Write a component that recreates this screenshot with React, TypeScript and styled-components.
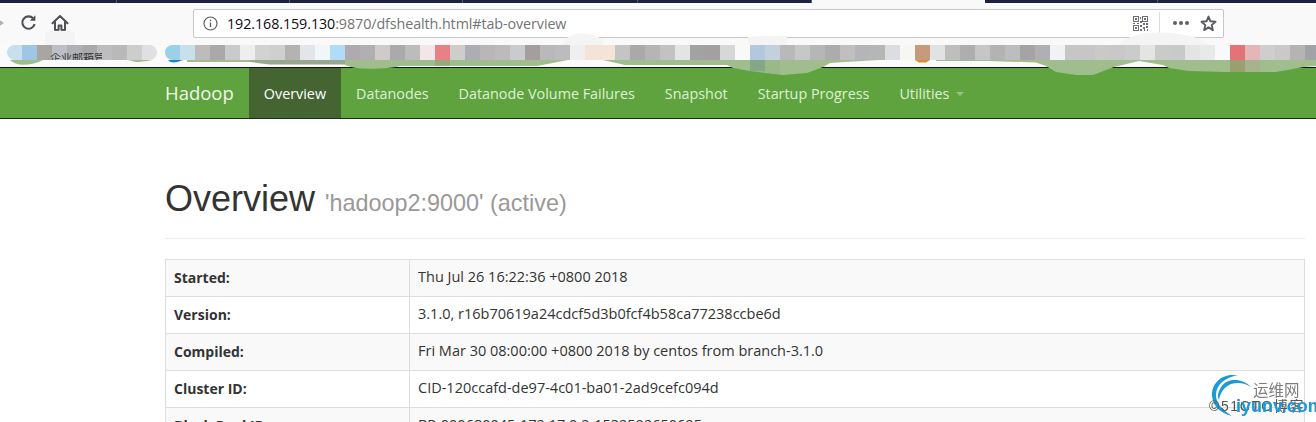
import React from "react";
import styled, { createGlobalStyle } from "styled-components";

const tabs = [117, 173, 173, 175, 174, 173, 173, 160];
const iconColor = "#4f4f55";

const firstCells = ["#c8dfee", "#9fc6e5", "#a9a5a3", "#bcc0c6", "#b0b1b4", "#a9a9ab", "#bdbdbf", "#b9b9b9", "#cdcdcd", "#e0e0e2"];
const secondCells = [
	"#9bd0e8", "#c8e0ec", "#bdbbbb", "#a9a9a9", "#c9cace", "#eeeeef", "#d2d2d2", "#cfcfcf", "#b5b3b1", "#e3e5e9",
	"#f1f6f8", "#b0dcf8", "#aeaab0", "#b0b0b2", "#cfcbca", "#a9aaac", "#bcbcbc", "#f3e6e8", "#e88087", "#cecdca",
	"#acaeb3", "#b8b6b8", "#bcbabb", "#cacbce", "#a49f9e", "#b9b9bc", "#bcbcbf", "#efeff0", "#f5e3d8", "#f5e3d8",
	"#c4c4c4", "#a9a9ab", "#b5b5b5", "#c2c2c4", "#e3e4e6", "#a2a2a3", "#a2a0a0", "#d6d7d8", "#f9f9fa", "#b3c7df",
	"#c4d0de", "#b9b9b9", "#c6c7c8", "#b6b6b8", "#acacad", "#c0bebe", "#b4b5b6", "#b6b6b6", "#dcdde1", "#f6f6f2",
	"#c69a7c", "#e2e2e2", "#bebebc", "#aeaeae", "#c6c6c6", "#b4b3b3", "#bcbdc1", "#a5a3a4", "#b0b0b2", "#f1f2f5",
	"#c6c6c6", "#c6c6c6", "#c9c9c6", "#c8c8ca", "#cbcbcc", "#e4e4e0", "#cacaca", "#c8c9cb", "#e4e4e4", "#e8e9eb",
	"#f9f9fa", "#e47277", "#e4b6b8", "#cecece", "#c9cac8", "#b5b4b2", "#a0a4a8",
];

const navItems = ["Datanodes", "Datanode Volume Failures", "Snapshot", "Startup Progress"];

const rows = [
	["Started:", "Thu Jul 26 16:22:36 +0800 2018"],
	["Version:", "3.1.0, r16b70619a24cdcf5d3b0fcf4b58ca77238ccbe6d"],
	["Compiled:", "Fri Mar 30 08:00:00 +0800 2018 by centos from branch-3.1.0"],
	["Cluster ID:", "CID-120ccafd-de97-4c01-ba01-2ad9cefc094d"],
	["Block Pool ID:", "BP-000680045-172.17.0.2-1532592650695"],
];

const QrIcon = () => (
	<svg width="15" height="15" viewBox="0 0 15 15" fill="none" stroke="#6d6d75">
		<rect x="0.5" y="0.5" width="5" height="5" />
		<rect x="9.5" y="0.5" width="5" height="5" />
		<rect x="0.5" y="9.5" width="5" height="5" />
		<path d="M2 2h2v2H2zM11 2h2v2h-2zM2 11h2v2H2z" fill="#6d6d75" stroke="none" />
		<path d="M7 1h1v2H7zM7 5h2v2H7zM0 7h2v1H0zM4 7h2v1H4zM10 7h2v2h-2zM13 7h2v2h-2zM7 9h2v2H7zM10 11h2v2h-2zM13 10h2v2h-2zM7 13h2v2H7zM11 13h1v2h-1zM14 13h1v2h-1z" fill="#6d6d75" stroke="none" />
	</svg>
);

const App = () => {
	return (
		<Page>
			<GlobalStyle />
			<TabStrip>
				{tabs.map((width, i) => (
					<Tab key={i} $width={width} $active={i === 5} />
				))}
			</TabStrip>

			<Toolbar>
				<BackArrow />
				<ToolIcon viewBox="0 0 20 20">
					<path d="M15.6 11a6.2 6.2 0 1 1-1.4-5.6" fill="none" stroke={iconColor} strokeWidth="2.1" />
					<path d="M16.4 2.2v5.6h-5.6z" fill={iconColor} />
				</ToolIcon>
				<ToolIcon viewBox="0 0 20 20">
					<path d="M2.5 10.2 10 3l7.5 7.2M5 8.6V17h3.6v-4.6h2.8V17H15V8.6" fill="none" stroke={iconColor} strokeWidth="2" strokeLinejoin="round" strokeLinecap="round" />
				</ToolIcon>
				<AddressBar>
					<svg width="15" height="15" viewBox="0 0 15 15" fill="none">
						<circle cx="7.5" cy="7.5" r="6.5" stroke="#5f5f66" strokeWidth="1.2" />
						<path d="M7.5 6.6v4.4M7.5 3.8v1.4" stroke="#5f5f66" strokeWidth="1.4" />
					</svg>
					<Url>
						192.168.159.130<UrlRest>:9870/dfshealth.html#tab-overview</UrlRest>
					</Url>
					<BarActions>
						<QrIcon />
						<BarDivider />
						<svg width="16" height="4" viewBox="0 0 16 4" fill="#5f5f66">
							<circle cx="2" cy="2" r="2" />
							<circle cx="8" cy="2" r="2" />
							<circle cx="14" cy="2" r="2" />
						</svg>
						<svg width="17" height="17" viewBox="0 0 17 17" fill="none">
							<path d="M8.5 1.6 10.5 6.3l5 .5-3.8 3.3 1.2 5-4.4-2.7-4.4 2.7 1.2-5L1.5 6.8l5-.5z" stroke="#5b5b62" strokeWidth="1.9" strokeLinejoin="round" />
						</svg>
					</BarActions>
				</AddressBar>
			</Toolbar>

			<Bookmarks>
				<CellGroup $round>
					{firstCells.map((color, i) => (
						<Cell key={i} $color={color} />
					))}
				</CellGroup>
				<CellGroup>
					{secondCells.map((color, i) => (
						<Cell key={i} $color={color} />
					))}
				</CellGroup>
			</Bookmarks>

			<Navbar>
				<NavInner>
					<Brand>Hadoop</Brand>
					<NavLink $active>Overview</NavLink>
					{navItems.map((item) => (
						<NavLink key={item}>{item}</NavLink>
					))}
					<NavLink>
						Utilities<Caret />
					</NavLink>
				</NavInner>
			</Navbar>

			<Content>
				<Header>
					<Title>
						Overview <Small>'hadoop2:9000' (active)</Small>
					</Title>
				</Header>
				<Table>
					<tbody>
						{rows.map(([label, value], i) => (
							<tr key={label}>
								<Th $odd={i % 2 === 0}>{label}</Th>
								<Td $odd={i % 2 === 0}>{value}</Td>
							</tr>
						))}
					</tbody>
				</Table>
			</Content>

			<Smear viewBox="0 0 1316 80" width="1316" height="80">
				<path d="M45 45V31.5Q60 30 75 31.5V45zM563 45Q566 36 575 34 590 31 603 40V45zM748 45V37Q770 35 787 36V45zM1119 45Q1125 37 1145 33 1170 31 1190 36 1205 40 1209 45z" fill="#f4f4f4" />
				<path d="M168 60H183Q178 62 174 62.5 170 62.5 168 60z" fill="#1a84c6" />
				<path d="M10 60H43Q35 64.7 22 64.7 14 64 10 60zM128 60H152Q142 62 136 62zM187 60H257V62H187zM345 60H568L537 66H400Q390 68.7 370 68.7 352 68.7 345 65zM603 60H880Q860 61 830 63L823 67 807 73 783 75 750 71 733 68 727 65H625zM936 60H1316V66L1304 67 1276 72H1226L1189 71 1169 68 1163 65 1139 61 1114 67 1093 75H1076L1056 72 1046 66 1036 62.5 989 61H936z" fill="#a0bd8e" />
				<path d="M250 60H345V64.5H270Q258 63 250 62z" fill="#97a88d" />
				<path d="M435 60h15v6h-15z" fill="#9aa97c" />
				<path d="M750 60h15v11.5l-15-.5z" fill="#83a886" />
				<path d="M765 60h15v14.5l-15-2z" fill="#9ab988" />
				<path d="M915 60h15l-4 2.5h-7z" fill="#d3922f" />
				<path d="M1230 60h15v12h-15z" fill="#97a06e" />
				<path d="M1245 60h15v12h-15z" fill="#a7b38e" />
			</Smear>

			<BookmarkPeek>企业邮箱管理</BookmarkPeek>

			<Watermark>
				<svg width="52" height="46" viewBox="0 0 52 46" fill="#1a9ad6">
					<path d="M30 1.5C14-2 3 10 4 22 5 32 12 39 24 42 15 36 8 30 8 21 8 11 17 3 30 1.5z" />
					<path d="M43 13C34 4 20 4 14 12 10 17 9 22 11 26 12 19 16 13 23 10 30 8 37 9 43 13z" />
				</svg>
				<WatermarkCn>运维网</WatermarkCn>
				<WatermarkBlog>©51CTO博客</WatermarkBlog>
				<WatermarkSite>iyunv.com</WatermarkSite>
			</Watermark>
		</Page>
	);
};

export default App;

const GlobalStyle = createGlobalStyle`
	html, body {
		margin: 0;
		padding: 0;
		background: #fff;
	}
	* {
		box-sizing: border-box;
	}
`;

const Page = styled.div`
	position: relative;
	width: 1316px;
	height: 422px;
	overflow: hidden;
	background: #fff;
	font-family: "Open Sans", "Liberation Sans", sans-serif;
	font-size: 14px;
	color: #333;
`;

const TabStrip = styled.div`
	display: flex;
	height: 3px;
`;

const Tab = styled.div<{ $width: number; $active?: boolean }>`
	flex: none;
	width: ${(p) => p.$width}px;
	background: ${(p) => (p.$active ? "#f9f9fa" : "#1d2140")};
	border-right: 1px solid ${(p) => (p.$active ? "#f9f9fa" : "#5a5d70")};
`;

const Toolbar = styled.div`
	display: flex;
	align-items: center;
	height: 42px;
	padding: 0 92px 2px 19px;
	background: #f9f9fa;
`;

const BackArrow = styled.div`
	position: absolute;
	left: -3px;
	top: 18px;
	width: 0;
	height: 0;
	border-top: 5px solid transparent;
	border-bottom: 5px solid transparent;
	border-left: 7px solid #b1b1b3;
`;

const ToolIcon = styled.svg`
	flex: none;
	width: 20px;
	height: 20px;
	margin-right: 11px;
`;

const AddressBar = styled.div`
	display: flex;
	align-items: center;
	flex: none;
	width: 1031px;
	height: 29px;
	margin-left: 112px;
	padding: 0 6px 0 9px;
	background: #fff;
	border: 1px solid #c8c8ca;
	border-radius: 2px;
`;

const Url = styled.div`
	margin-left: 9px;
	font-size: 14.3px;
	letter-spacing: -0.08px;
	color: #0c0c0d;
`;

const UrlRest = styled.span`
	color: #737373;
`;

const BarActions = styled.div`
	display: flex;
	align-items: center;
	margin-left: auto;
	gap: 11px;
`;

const BarDivider = styled.div`
	width: 1px;
	height: 22px;
	background: #dcdcdd;
	margin: 0 2px 0 0;
`;

const Bookmarks = styled.div`
	display: flex;
	gap: 8px;
	height: 23px;
	padding-left: 7px;
	background: #fafafa;
	border-bottom: 1px solid #111;
`;

const CellGroup = styled.div<{ $round?: boolean }>`
	display: flex;
	flex: none;
	height: 15px;
	overflow: hidden;
	border-radius: ${(p) => (p.$round ? "8px" : "8px 0 0 8px")};
`;

const Cell = styled.div<{ $color: string }>`
	flex: none;
	width: 15px;
	height: 15px;
	background: ${(p) => p.$color};
`;

const BookmarkPeek = styled.div`
	position: absolute;
	left: 50px;
	top: 53px;
	width: 52px;
	height: 7px;
	overflow: hidden;
	font-family: "Noto Sans CJK SC", sans-serif;
	font-size: 11px;
	line-height: 8px;
	color: #333;
	white-space: nowrap;
`;

const Navbar = styled.div`
	height: 51px;
	background: #5fa33e;
	border-bottom: 1px solid #1d3012;
`;

const NavInner = styled.div`
	display: flex;
	height: 50px;
	padding-left: 150px;
`;

const Brand = styled.div`
	padding: 15px;
	font-size: 18.5px;
	line-height: 20px;
	color: #f1f7ed;
`;

const NavLink = styled.div<{ $active?: boolean }>`
	display: flex;
	align-items: center;
	padding: 0 15px;
	font-size: 14.35px;
	color: ${(p) => (p.$active ? "#fff" : "#dff0d8")};
	background: ${(p) => (p.$active ? "#446531" : "transparent")};
`;

const Caret = styled.span`
	display: inline-block;
	margin-left: 7px;
	margin-top: 2px;
	border-top: 4px solid #9ac08a;
	border-left: 4px solid transparent;
	border-right: 4px solid transparent;
`;

const Content = styled.div`
	width: 1140px;
	margin-left: 165px;
`;

const Header = styled.div`
	margin-top: 60px;
	padding-bottom: 5px;
	margin-bottom: 20px;
	border-bottom: 1px solid #eee;
`;

const Title = styled.h1`
	margin: 20px 0 10px;
	font-family: "Liberation Sans", Arial, sans-serif;
	font-size: 36px;
	font-weight: 500;
	line-height: 40px;
	color: #333;
`;

const Small = styled.small`
	font-size: 23.4px;
	font-weight: 400;
	color: #999;
`;

const Table = styled.table`
	width: 100%;
	border-collapse: collapse;
	table-layout: fixed;
`;

const Th = styled.th<{ $odd: boolean }>`
	width: 244px;
	padding: 8px;
	line-height: 20px;
	text-align: left;
	font-weight: 700;
	background: ${(p) => (p.$odd ? "#f9f9f9" : "#fff")};
	border: 1px solid #ddd;
`;

const Td = styled.td<{ $odd: boolean }>`
	padding: 7px 8px 9px;
	line-height: 20px;
	font-size: 14.5px;
	background: ${(p) => (p.$odd ? "#f9f9f9" : "#fff")};
	border: 1px solid #ddd;
`;

const Smear = styled.svg`
	position: absolute;
	left: 0;
	top: 0;
	pointer-events: none;
`;

const Watermark = styled.div`
	position: absolute;
	left: 1208px;
	top: 374px;
	width: 108px;
	height: 48px;
	filter: blur(0.3px);
	svg {
		position: absolute;
		left: 0;
		top: 0;
	}
`;

const WatermarkCn = styled.div`
	position: absolute;
	left: 45px;
	top: 6px;
	font-family: "Noto Sans CJK SC", sans-serif;
	font-size: 15.5px;
	line-height: 18px;
	color: #7d7d7d;
`;

const WatermarkBlog = styled.div`
	position: absolute;
	left: 1px;
	top: 23px;
	font-family: "Liberation Sans", "Noto Sans CJK SC", sans-serif;
	font-size: 14px;
	line-height: 18px;
	letter-spacing: 1.6px;
	color: #555;
	white-space: nowrap;
`;

const WatermarkSite = styled.div`
	position: absolute;
	left: 28px;
	top: 23px;
	font-family: "Liberation Sans", sans-serif;
	font-size: 18px;
	font-weight: 700;
	line-height: 18px;
	color: #1a9ad6;
	white-space: nowrap;
`;
